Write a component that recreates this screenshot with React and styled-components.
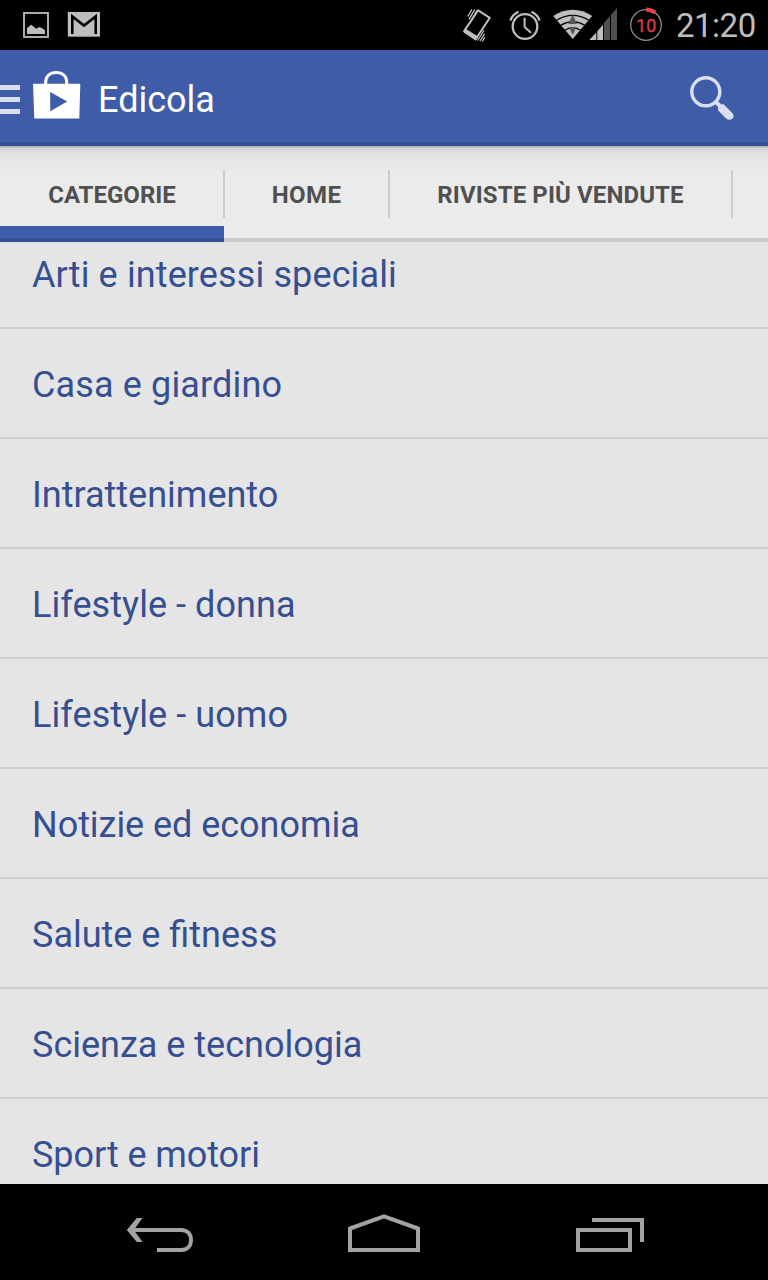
import React from 'react';
import styled, { createGlobalStyle } from 'styled-components';

const colors = {
  primary: '#3f5ca9',
  primaryDark: '#354f91',
  status: '#bebebe',
  nav: '#a3a3a3',
  list: '#e5e5e5',
  tabs: '#ebebeb',
  tabText: '#505050',
  divider: '#cdcdcd'
};

const GlobalStyle = createGlobalStyle`
  * {
    box-sizing: border-box;
  }

  body {
    margin: 0;
    background: #000;
    font-family: Roboto, 'Liberation Sans', sans-serif;
  }
`;

const Screen = styled.div`
  display: flex;
  flex-direction: column;
  width: 768px;
  height: 1280px;
  overflow: hidden;
`;

const StatusBar = styled.div`
  display: flex;
  flex: none;
  height: 50px;
  background: #000;
  color: ${colors.status};
`;

const Icon = styled.svg`
  display: block;
  flex: none;
`;

const Spacer = styled.div`
  flex: 1;
`;

const Clock = styled.time`
  width: 98px;
  padding-left: 6px;
  font-size: 33px;
  line-height: 51px;
  letter-spacing: -0.5px;
  white-space: nowrap;
`;

const AppBar = styled.header`
  display: flex;
  flex: none;
  height: 96px;
  background: ${colors.primary};
  border-bottom: 4px solid ${colors.primaryDark};
`;

const Title = styled.h1`
  margin: 0;
  padding-left: 11px;
  color: #fff;
  font-size: 36px;
  font-weight: 400;
  line-height: 100px;
`;

const Tabs = styled.nav`
  display: flex;
  flex: none;
  height: 96px;
  overflow: hidden;
  background: linear-gradient(#a9a9a9 0, #d2d2d2 2px, #e0e0e0 6px, #e7e7e7 14px, ${colors.tabs} 28px);
  box-shadow: inset 0 -4px 0 #c8c8c8;
`;

const Tab = styled.a`
  display: flex;
  flex: 0 0 ${({ $width }) => $width}px;
  justify-content: center;
  color: ${colors.tabText};
  font-size: 24px;
  font-weight: 700;
  line-height: 98px;
  letter-spacing: ${({ $spacing }) => $spacing || 0}px;
  white-space: nowrap;
  box-shadow: ${({ $active }) =>
    $active ? `inset 0 -4px 0 ${colors.primaryDark}, inset 0 -16px 0 ${colors.primary}` : 'none'};
`;

const TabDivider = styled.span`
  flex: none;
  width: 2px;
  height: 48px;
  margin: 24px -1px 0;
  background: ${colors.divider};
  z-index: 1;
`;

const ListViewport = styled.main`
  flex: 1;
  min-height: 0;
  overflow: hidden;
  background: ${colors.list};
`;

// The list is scrolled a little past its first row's top edge
const List = styled.ul`
  list-style: none;
  margin: -23px 0 0;
  padding: 0;
`;

const Row = styled.li`
  height: 110px;
  padding-left: 32px;
  border-bottom: 2px solid ${colors.divider};
  color: ${colors.primaryDark};
  font-size: 36px;
  line-height: 112px;
  letter-spacing: ${({ $spacing }) => $spacing || 0}px;
`;

const NavBar = styled.footer`
  display: flex;
  flex: none;
  height: 96px;
  background: #000;
`;

const tabs = [
  { label: 'CATEGORIE', width: 224, active: true },
  { label: 'HOME', width: 165, spacing: 0.4 },
  { label: 'RIVISTE PIÙ VENDUTE', width: 343, spacing: 0.1 }
];

const categories = [
  { name: 'Arti e interessi speciali', spacing: 0.12 },
  { name: 'Casa e giardino', spacing: 0.14 },
  { name: 'Intrattenimento' },
  { name: 'Lifestyle - donna', spacing: 0.06 },
  { name: 'Lifestyle - uomo', spacing: 0.08 },
  { name: 'Notizie ed economia', spacing: -0.04 },
  { name: 'Salute e fitness' },
  { name: 'Scienza e tecnologia' },
  { name: 'Sport e motori', spacing: -0.08 }
];

const PictureIcon = () => (
  <Icon width="60" height="50" viewBox="0 0 60 50">
    <rect x="24" y="13" width="24" height="24" fill="none" stroke={colors.status} strokeWidth="1.8" />
    <path d="M27 34V28l4.3-3.3 5 4 3-1.7 3 1.2 2.7 2.3V34z" fill={colors.status} />
  </Icon>
);

const MailIcon = () => (
  <Icon width="50" height="50" viewBox="60 0 50 50">
    <rect x="67.8" y="12" width="32.2" height="24.7" fill={colors.status} />
    <path d="M72.3 34V16.5L84 25.5l11.7-9V34" fill="none" stroke="#000" strokeWidth="2.6" />
  </Icon>
);

const VibrateIcon = () => (
  <Icon width="42" height="50" viewBox="458 0 42 50">
    <path d="M478.2 10.3L489.8 17.8L476 38.8L464.4 30.6z" fill="none" stroke={colors.status} strokeWidth="2" strokeLinejoin="round" />
    <path d="M465.2 29L477.4 36.6L475.8 40.2L463.6 32z" fill={colors.status} stroke={colors.status} strokeLinejoin="round" />
    <path d="M467.8 16.5L471.8 9.5M469 19.3L474.8 9.5M471 21L477 10.5" stroke={colors.status} strokeWidth="1.4" />
    <path d="M477.6 40.5L484 30.5M480 41L484.6 33.8M482.2 41.5L484.8 37.4" stroke={colors.status} strokeWidth="1.3" />
  </Icon>
);

const AlarmIcon = () => (
  <Icon width="48" height="50" viewBox="500 0 48 50">
    <g fill="none" stroke={colors.status}>
      <circle cx="525" cy="26.5" r="12.3" strokeWidth="2.3" />
      <path d="M524.6 17.7V27L531 32.8" strokeWidth="2" />
      <path d="M510.4 20.5Q512.5 14.5 518.5 11.8M539.6 20.5Q537.5 14.5 531.5 11.8" strokeWidth="2.3" />
    </g>
  </Icon>
);

const SignalIcon = () => (
  <Icon width="74" height="50" viewBox="548 0 74 50">
    <path d="M572.7 39L553.2 16Q572.7 3.5 592.2 16z" fill={colors.status} />
    <g fill="none" stroke="#000" strokeWidth="1.2">
      <path d="M556.5 20.3Q572.7 10.5 588.9 20.3" />
      <path d="M560.7 25.3Q572.7 18 584.7 25.3" />
      <path d="M564.8 30.3Q572.7 25.5 580.6 30.3" />
    </g>
    <path d="M568.4 24L572.7 14.5L577 24zM569 27H576.4L572.7 35z" fill="#565656" />
    <path d="M589.2 40L596.3 32.5V40zM597.3 40V31.2L603 24.8V40z" fill={colors.status} />
    <path d="M604 40V22.8L610 16V40zM611 40V14.8L617 8V40z" fill="#505050" />
  </Icon>
);

const BatteryIcon = () => (
  <Icon width="48" height="50" viewBox="622 0 48 50">
    <circle cx="646" cy="25" r="15.3" fill="none" stroke="#8c8c8c" strokeWidth="1.3" />
    <path d="M646 9.5A15.5 15.5 0 0 1 655.3 12.6" fill="none" stroke="#e04444" strokeWidth="4.2" />
    <text x="646.2" y="32" textAnchor="middle" fontSize="19" textLength="20" lengthAdjust="spacingAndGlyphs" fill="#d83a3a" stroke="#d83a3a" strokeWidth="0.5">10</text>
  </Icon>
);

const DrawerIcon = () => (
  <Icon width="20" height="92" viewBox="0 50 20 92">
    <path d="M0 87.5H20M0 99.5H20M0 111.5H20" stroke="#d9def0" strokeWidth="5" />
  </Icon>
);

const StoreIcon = () => (
  <Icon width="67" height="92" viewBox="20 50 67 92">
    <path d="M45.6 85V83C45.6 76 50 72.5 56.2 72.5S66.8 76 66.8 83V85" fill="none" stroke="#fff" strokeWidth="3" />
    <path d="M33 83.7H80.3L79.3 118.6H34.3zM50.2 92V111.3L67.2 101.6z" fill="#fff" fillRule="evenodd" />
  </Icon>
);

const SearchIcon = () => (
  <Icon width="88" height="92" viewBox="680 50 88 92">
    <circle cx="705.8" cy="91.8" r="14" fill="none" stroke="#d9def0" strokeWidth="3.4" />
    <path d="M715.5 101.5L720.5 106.5" stroke="#d9def0" strokeWidth="4" />
    <path d="M718 107L723 103.8L732.5 113.3Q735 117 732 119Q729 121 725.8 118.2L718.2 110.5z" fill="#d9def0" />
  </Icon>
);

const NavIcons = () => (
  <Icon width="768" height="96" viewBox="0 1184 768 96" fill="none" stroke={colors.nav} strokeWidth="4">
    <path d="M131 1230H181C187.5 1230 191 1234.5 191 1240S187.5 1250 181 1250H157" />
    <path d="M136.8 1218H142.5L133.8 1230L142.5 1242H136.8L126.8 1230z" fill={colors.nav} stroke="none" />
    <path d="M350 1250V1228.5L384 1216.3L418 1228.5V1250z" />
    <path d="M578 1230H630V1250H578zM592 1220H642V1242" />
  </Icon>
);

const App = () => (
  <>
    <GlobalStyle />
    <Screen>
      <StatusBar>
        <PictureIcon />
        <MailIcon />
        <Spacer />
        <VibrateIcon />
        <AlarmIcon />
        <SignalIcon />
        <BatteryIcon />
        <Clock>21:20</Clock>
      </StatusBar>

      <AppBar>
        <DrawerIcon />
        <StoreIcon />
        <Title>Edicola</Title>
        <Spacer />
        <SearchIcon />
      </AppBar>

      <Tabs>
        {tabs.map((tab) => (
          <React.Fragment key={tab.label}>
            <Tab $width={tab.width} $active={tab.active} $spacing={tab.spacing}>
              {tab.label}
            </Tab>
            <TabDivider />
          </React.Fragment>
        ))}
      </Tabs>

      <ListViewport>
        <List>
          {categories.map(({ name, spacing }) => (
            <Row key={name} $spacing={spacing}>{name}</Row>
          ))}
        </List>
      </ListViewport>

      <NavBar>
        <NavIcons />
      </NavBar>
    </Screen>
  </>
);

export default App;
